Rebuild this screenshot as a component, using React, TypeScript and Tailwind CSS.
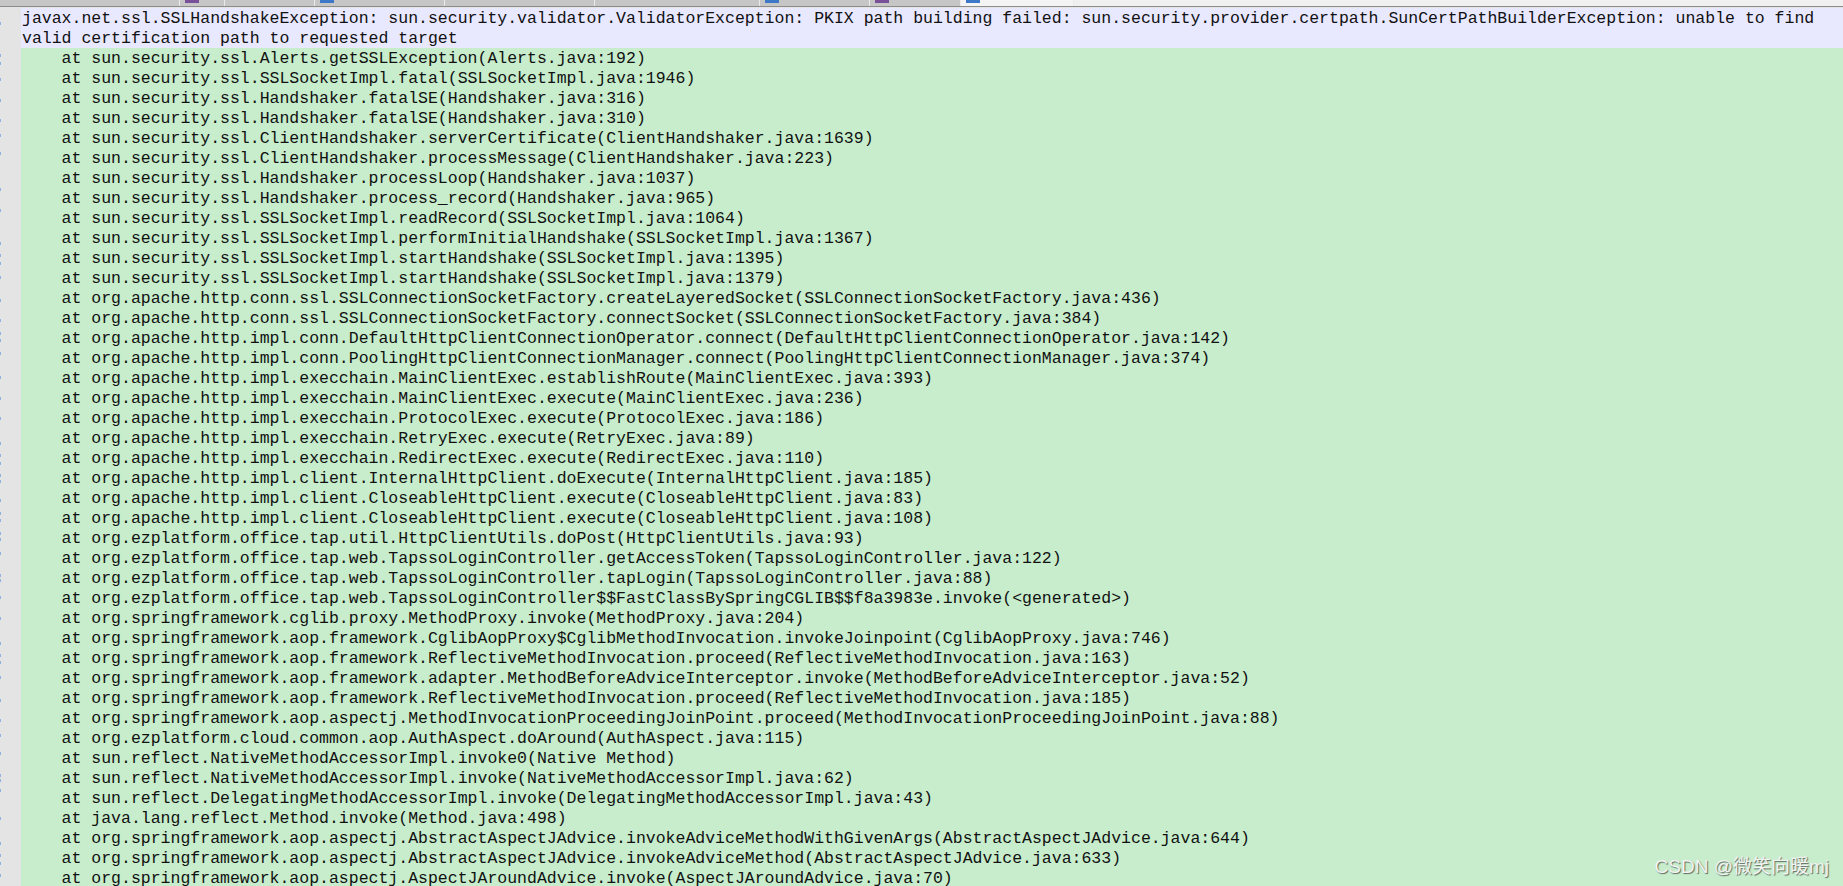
import React from "react";

const header = [
  "javax.net.ssl.SSLHandshakeException: sun.security.validator.ValidatorException: PKIX path building failed: sun.security.provider.certpath.SunCertPathBuilderException: unable to find",
  "valid certification path to requested target",
];

const frames = [
  "sun.security.ssl.Alerts.getSSLException(Alerts.java:192)",
  "sun.security.ssl.SSLSocketImpl.fatal(SSLSocketImpl.java:1946)",
  "sun.security.ssl.Handshaker.fatalSE(Handshaker.java:316)",
  "sun.security.ssl.Handshaker.fatalSE(Handshaker.java:310)",
  "sun.security.ssl.ClientHandshaker.serverCertificate(ClientHandshaker.java:1639)",
  "sun.security.ssl.ClientHandshaker.processMessage(ClientHandshaker.java:223)",
  "sun.security.ssl.Handshaker.processLoop(Handshaker.java:1037)",
  "sun.security.ssl.Handshaker.process_record(Handshaker.java:965)",
  "sun.security.ssl.SSLSocketImpl.readRecord(SSLSocketImpl.java:1064)",
  "sun.security.ssl.SSLSocketImpl.performInitialHandshake(SSLSocketImpl.java:1367)",
  "sun.security.ssl.SSLSocketImpl.startHandshake(SSLSocketImpl.java:1395)",
  "sun.security.ssl.SSLSocketImpl.startHandshake(SSLSocketImpl.java:1379)",
  "org.apache.http.conn.ssl.SSLConnectionSocketFactory.createLayeredSocket(SSLConnectionSocketFactory.java:436)",
  "org.apache.http.conn.ssl.SSLConnectionSocketFactory.connectSocket(SSLConnectionSocketFactory.java:384)",
  "org.apache.http.impl.conn.DefaultHttpClientConnectionOperator.connect(DefaultHttpClientConnectionOperator.java:142)",
  "org.apache.http.impl.conn.PoolingHttpClientConnectionManager.connect(PoolingHttpClientConnectionManager.java:374)",
  "org.apache.http.impl.execchain.MainClientExec.establishRoute(MainClientExec.java:393)",
  "org.apache.http.impl.execchain.MainClientExec.execute(MainClientExec.java:236)",
  "org.apache.http.impl.execchain.ProtocolExec.execute(ProtocolExec.java:186)",
  "org.apache.http.impl.execchain.RetryExec.execute(RetryExec.java:89)",
  "org.apache.http.impl.execchain.RedirectExec.execute(RedirectExec.java:110)",
  "org.apache.http.impl.client.InternalHttpClient.doExecute(InternalHttpClient.java:185)",
  "org.apache.http.impl.client.CloseableHttpClient.execute(CloseableHttpClient.java:83)",
  "org.apache.http.impl.client.CloseableHttpClient.execute(CloseableHttpClient.java:108)",
  "org.ezplatform.office.tap.util.HttpClientUtils.doPost(HttpClientUtils.java:93)",
  "org.ezplatform.office.tap.web.TapssoLoginController.getAccessToken(TapssoLoginController.java:122)",
  "org.ezplatform.office.tap.web.TapssoLoginController.tapLogin(TapssoLoginController.java:88)",
  "org.ezplatform.office.tap.web.TapssoLoginController$$FastClassBySpringCGLIB$$f8a3983e.invoke(<generated>)",
  "org.springframework.cglib.proxy.MethodProxy.invoke(MethodProxy.java:204)",
  "org.springframework.aop.framework.CglibAopProxy$CglibMethodInvocation.invokeJoinpoint(CglibAopProxy.java:746)",
  "org.springframework.aop.framework.ReflectiveMethodInvocation.proceed(ReflectiveMethodInvocation.java:163)",
  "org.springframework.aop.framework.adapter.MethodBeforeAdviceInterceptor.invoke(MethodBeforeAdviceInterceptor.java:52)",
  "org.springframework.aop.framework.ReflectiveMethodInvocation.proceed(ReflectiveMethodInvocation.java:185)",
  "org.springframework.aop.aspectj.MethodInvocationProceedingJoinPoint.proceed(MethodInvocationProceedingJoinPoint.java:88)",
  "org.ezplatform.cloud.common.aop.AuthAspect.doAround(AuthAspect.java:115)",
  "sun.reflect.NativeMethodAccessorImpl.invoke0(Native Method)",
  "sun.reflect.NativeMethodAccessorImpl.invoke(NativeMethodAccessorImpl.java:62)",
  "sun.reflect.DelegatingMethodAccessorImpl.invoke(DelegatingMethodAccessorImpl.java:43)",
  "java.lang.reflect.Method.invoke(Method.java:498)",
  "org.springframework.aop.aspectj.AbstractAspectJAdvice.invokeAdviceMethodWithGivenArgs(AbstractAspectJAdvice.java:644)",
  "org.springframework.aop.aspectj.AbstractAspectJAdvice.invokeAdviceMethod(AbstractAspectJAdvice.java:633)",
  "org.springframework.aop.aspectj.AspectJAroundAdvice.invoke(AspectJAroundAdvice.java:70)",
];

// clipped line-number fragments peeking out on the gutter's left edge (page y)
const gutterMarks = [
  23, 55, 63, 79, 100, 120, 135, 153, 189, 210, 243, 255, 263, 277, 300, 320,
  333, 340, 353, 377, 398, 418, 443, 455, 463, 475, 481, 500, 513, 520, 533,
  539, 553, 575, 580, 597, 618, 643, 655, 662, 677, 700, 720, 735, 753, 775,
  780, 790, 818, 843, 855, 863, 875,
];

// tab strip pieces: width, background, icon colour
const tabs = [
  { w: 180, bg: "bg-[#c6c6c6]", icon: "" },
  { w: 45, bg: "bg-[#c6c6c6]", icon: "bg-[#7a4f9a]" },
  { w: 90, bg: "bg-[#c6c6c6]", icon: "" },
  { w: 130, bg: "bg-[#c6c6c6]", icon: "bg-[#3d78c8]" },
  { w: 150, bg: "bg-[#c6c6c6]", icon: "" },
  { w: 165, bg: "bg-[#c6c6c6]", icon: "" },
  { w: 110, bg: "bg-[#c6c6c6]", icon: "bg-[#3d78c8]" },
  { w: 91, bg: "bg-[#c6c6c6]", icon: "bg-[#7a4f9a]" },
  { w: 113, bg: "bg-[#f4f4f4]", icon: "bg-[#3d78c8]" },
];

const Row = ({ index, text, selected }: { index: number; text: string; selected: boolean }) => {
  const top = 8 + index * 20;
  const marks = gutterMarks.filter((y) => y >= top && y < top + 20);
  return (
    <div className="flex h-[20px]">
      <div className="relative w-[21px] shrink-0 bg-[#e4e4e4]">
        {marks.map((y) => (
          <span
            key={y}
            className="absolute left-0 w-[1px] h-[3px] bg-[#8fb2de]"
            style={{ top: y - top - 1 }}
          />
        ))}
      </div>
      <div
        className={
          selected
            ? "flex-1 bg-[#e8e8ff] pl-[1px] pt-[1px] whitespace-pre text-[#111]"
            : "flex-1 bg-[#c7edcc] pl-[1px] pt-[1px] whitespace-pre text-[#111]"
        }
      >
        {text}
      </div>
    </div>
  );
};

export default function App() {
  const rows = [...header, ...frames.map((f) => "    at " + f)];
  return (
    <div className="relative w-[1843px] h-[886px] overflow-hidden bg-[#c7edcc]">
      <div className="flex h-[6px] bg-[#f0f0f0]">
        {tabs.map((t, i) => (
          <div
            key={i}
            className={"relative shrink-0 border-r border-[#eaeaea] " + t.bg}
            style={{ width: t.w }}
          >
            {t.icon ? <span className={"absolute left-[5px] top-0 w-[14px] h-[3px] " + t.icon} /> : null}
          </div>
        ))}
      </div>
      <div className="h-[1px] bg-[#8c8c8c]" />
      <div className="h-[1px] bg-[#e4e4e4]" />
      <div className="font-['Liberation_Mono','Courier_New',monospace] text-[16.5px] leading-[20px]">
        {rows.map((r, i) => (
          <Row key={i} index={i} text={r} selected={i < 2} />
        ))}
      </div>
      <div className="absolute right-[14px] bottom-[8px] font-['Liberation_Sans','Noto_Sans_CJK_SC',sans-serif] text-[19px] leading-[22px] text-[#f2f2f2] [text-shadow:1px_1px_1px_rgba(0,0,0,0.55)]">
        CSDN @微笑向暖mj
      </div>
    </div>
  );
}
